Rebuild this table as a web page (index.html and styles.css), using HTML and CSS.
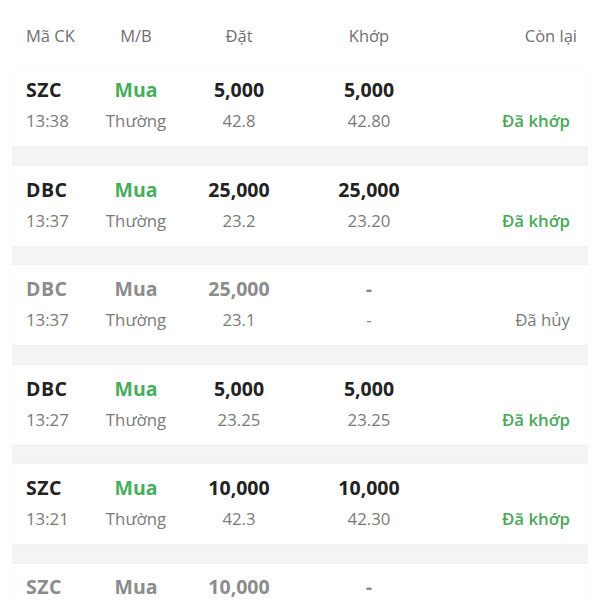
FILE: index.html
```html
<!DOCTYPE html>
<html lang="vi">
<head>
<meta charset="utf-8">
<link rel="stylesheet" href="styles.css">
</head>
<body>
<div class="page">
  <div class="head grid">
    <div>Mã CK</div>
    <div class="c">M/B</div>
    <div class="c">Đặt</div>
    <div class="c">Khớp</div>
    <div class="r">Còn lại</div>
  </div>
  <div class="list">
    <div class="row grid">
      <div class="code">SZC</div><div class="c buy">Mua</div><div class="c num">5,000</div><div class="c num">5,000</div><div></div>
      <div class="sub">13:38</div><div class="c sub">Thường</div><div class="c sub">42.8</div><div class="c sub">42.80</div><div class="r done">Đã khớp</div>
    </div>
    <div class="row grid">
      <div class="code">DBC</div><div class="c buy">Mua</div><div class="c num">25,000</div><div class="c num">25,000</div><div></div>
      <div class="sub">13:37</div><div class="c sub">Thường</div><div class="c sub">23.2</div><div class="c sub">23.20</div><div class="r done">Đã khớp</div>
    </div>
    <div class="row grid cancel">
      <div class="code">DBC</div><div class="c buy">Mua</div><div class="c num">25,000</div><div class="c num">-</div><div></div>
      <div class="sub">13:37</div><div class="c sub">Thường</div><div class="c sub">23.1</div><div class="c sub">-</div><div class="r sub">Đã hủy</div>
    </div>
    <div class="row grid">
      <div class="code">DBC</div><div class="c buy">Mua</div><div class="c num">5,000</div><div class="c num">5,000</div><div></div>
      <div class="sub">13:27</div><div class="c sub">Thường</div><div class="c sub">23.25</div><div class="c sub">23.25</div><div class="r done">Đã khớp</div>
    </div>
    <div class="row grid">
      <div class="code">SZC</div><div class="c buy">Mua</div><div class="c num">10,000</div><div class="c num">10,000</div><div></div>
      <div class="sub">13:21</div><div class="c sub">Thường</div><div class="c sub">42.3</div><div class="c sub">42.30</div><div class="r done">Đã khớp</div>
    </div>
    <div class="row grid cancel">
      <div class="code">SZC</div><div class="c buy">Mua</div><div class="c num">10,000</div><div class="c num">-</div><div></div>
    </div>
  </div>
</div>
</body>
</html>
```
FILE: styles.css
```css
html, body {
  margin: 0;
  padding: 0;
  background: #ffffff;
}
body {
  font-family: "Open Sans", "Noto Sans", sans-serif;
  width: 600px;
  height: 600px;
  overflow: hidden;
}
.page {
  padding: 0 12px;
}
.grid {
  display: grid;
  grid-template-columns: 64px 92px 114px 146px 1fr;
  align-items: center;
}
.c { text-align: center; }
.r { text-align: right; }
.head {
  height: 62px;
  padding: 4px 11px 0 14px;
  font-size: 16.5px;
  color: #707070;
}
.list {
  background: #f4f4f4;
  display: flex;
  flex-direction: column;
  gap: 19.5px;
}
.row {
  background: #ffffff;
  padding: 8px 18px 10px 14px;
  box-shadow: 0 0 1px rgba(0, 0, 0, 0.1);
  grid-auto-rows: 31px;
}
.code, .buy, .num {
  font-size: 19.5px;
  font-weight: 700;
  color: #222222;
}
.code { letter-spacing: 0.5px; }
.buy { color: #47ae5b; }
.sub {
  font-size: 16.8px;
  color: #7a7a7a;
}
.done {
  font-size: 16.8px;
  font-weight: 600;
  color: #4aa85b;
}
.cancel .code, .cancel .buy, .cancel .num {
  color: #8c8c8c;
}
.cancel:last-child {
  padding-top: 7px;
}
```
